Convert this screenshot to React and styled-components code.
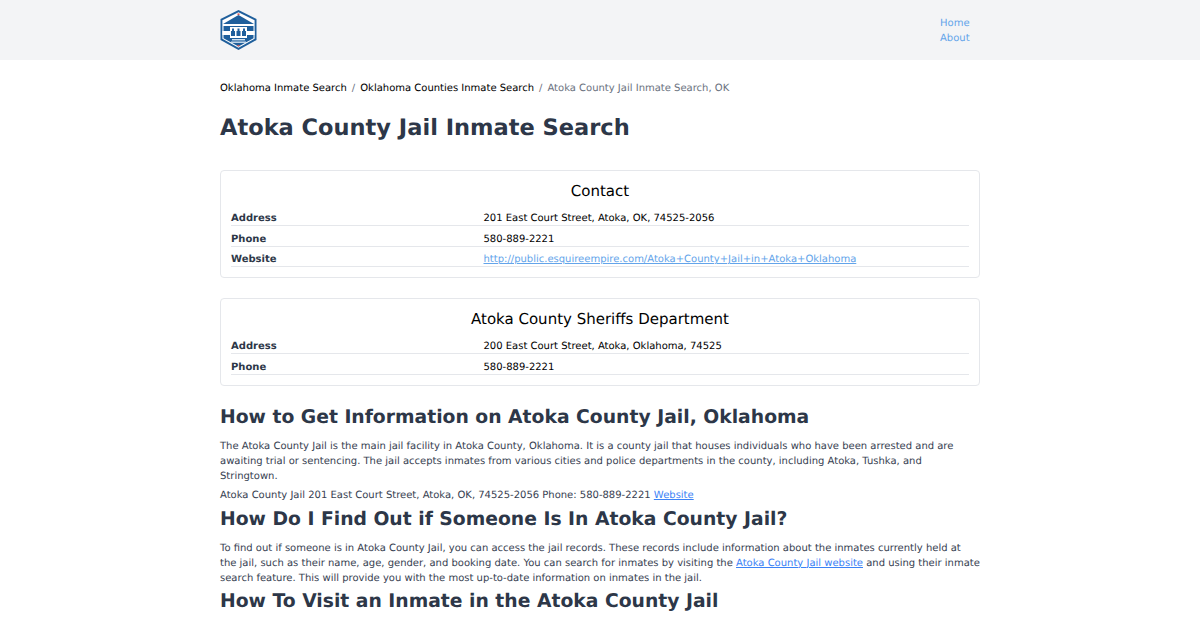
import React from 'react';
import styled, { createGlobalStyle } from 'styled-components';

const Global = createGlobalStyle`
  html, body { margin: 0; padding: 0; background: #fff; overflow: hidden; }
  body {
    font-family: "DejaVu Sans", sans-serif;
    color: #2d3748;
    text-rendering: geometricPrecision;
  }
`;

const Header = styled.header`
  height: 60px;
  background: #f3f4f6;
`;

const HeaderInner = styled.div`
  width: 760px;
  height: 100%;
  margin: 0 auto;
  display: flex;
  align-items: center;
  justify-content: space-between;
`;

const Nav = styled.nav`
  display: flex;
  flex-direction: column;
  width: 40px;
  margin-top: 1px;
`;

const NavLink = styled.a`
  font-size: 10px;
  line-height: 15px;
  color: #63a4ea;
  text-decoration: none;
`;

const Main = styled.main`
  width: 760px;
  margin: 0 auto;
`;

const Crumbs = styled.div`
  display: flex;
  gap: 5px;
  padding-top: 21px;
  font-size: 10px;
  line-height: 15px;
`;

const Crumb = styled.a`
  color: ${p => (p.$current ? '#6b7280' : '#000')};
  text-decoration: none;
`;

const Sep = styled.span`
  color: #6b7280;
`;

const Title = styled.h1`
  margin: 17px 0 27px;
  font-size: 22.5px;
  line-height: 30px;
  font-weight: 700;
`;

const Card = styled.section`
  border: 1px solid #e5e7eb;
  border-radius: 4px;
  padding: 10px 10px 10px;
  margin-bottom: 20px;
`;

const CardTitle = styled.h3`
  margin: 0 0 4.5px;
  text-align: center;
  font-size: 15px;
  font-weight: 400;
  line-height: 20px;
  color: #000;
`;

const Row = styled.div`
  display: grid;
  grid-template-columns: 252.5px 1fr;
  border-bottom: 1px solid #e5e7eb;
  font-size: 10px;
  line-height: 13px;
  padding-top: 6.5px;
`;

const Label = styled.span`
  font-weight: 700;
`;

const Value = styled.span`
  color: #000;
`;

const Url = styled.a`
  color: #63a4ea;
  text-decoration: underline;
`;

const Heading = styled.h2`
  margin: ${p => p.$top}px 0 0;
  font-size: 18.75px;
  line-height: 20px;
  font-weight: 700;
`;

const Para = styled.p`
  margin: ${p => p.$top}px 0 0;
  font-size: 10px;
  line-height: 15px;
  color: #374151;
`;

const TextLink = styled.a`
  color: #3b82f6;
  text-decoration: underline;
`;

const Logo = () => (
  <svg width="37" height="40" viewBox="0 0 37 40">
    <path d="M18.5 0 36.5 9v21L18.5 40 .5 30V9z" fill="#1f5f9c" />
    <path d="M18.5 2.2 34.6 10.2v18.6L18.5 37.8 2.4 28.8V10.2z" fill="#fff" />
    <path d="M18.5 5 34 14H3z" fill="#1f5f9c" />
    <path d="M3.5 16h30v12.2L18.5 36.4 3.5 28.2z" fill="#1f5f9c" />
    <path d="M2.4 21h8v4h-8zM26.6 21h8v4h-8z" fill="#fff" />
    <rect x="10" y="17" width="17" height="11" fill="#fff" />
    <path d="M12 18.5h2v2.5h1v5h-4v-5h1zM17.5 18.5h2v2.5h1v5h-4v-5h1zM23 18.5h2v2.5h1v5h-4v-5h1z" fill="#1f5f9c" />
    <rect x="12" y="29" width="13" height="1.4" fill="#cfe0f0" />
    <rect x="11" y="31.5" width="15" height="1.4" fill="#cfe0f0" />
    <rect x="17.5" y="3.4" width="2" height="1.6" fill="#d9534f" />
    <rect x="17.5" y="35" width="2" height="1.4" fill="#d9534f" />
  </svg>
);

export default function App() {
  return (
    <>
      <Global />
      <Header>
        <HeaderInner>
          <Logo />
          <Nav>
            <NavLink href="#">Home</NavLink>
            <NavLink href="#">About</NavLink>
          </Nav>
        </HeaderInner>
      </Header>
      <Main>
        <Crumbs>
          <Crumb href="#">Oklahoma Inmate Search</Crumb>
          <Sep>/</Sep>
          <Crumb href="#">Oklahoma Counties Inmate Search</Crumb>
          <Sep>/</Sep>
          <Crumb $current>Atoka County Jail Inmate Search, OK</Crumb>
        </Crumbs>
        <Title>Atoka County Jail Inmate Search</Title>
        <Card>
          <CardTitle>Contact</CardTitle>
          <Row><Label>Address</Label><Value>201 East Court Street, Atoka, OK, 74525-2056</Value></Row>
          <Row><Label>Phone</Label><Value>580-889-2221</Value></Row>
          <Row><Label>Website</Label><Url href="#">http://public.esquireempire.com/Atoka+County+Jail+in+Atoka+Oklahoma</Url></Row>
        </Card>
        <Card>
          <CardTitle>Atoka County Sheriffs Department</CardTitle>
          <Row><Label>Address</Label><Value>200 East Court Street, Atoka, Oklahoma, 74525</Value></Row>
          <Row><Label>Phone</Label><Value>580-889-2221</Value></Row>
        </Card>
        <Heading $top={22}>How to Get Information on Atoka County Jail, Oklahoma</Heading>
        <Para $top={11.5}>The Atoka County Jail is the main jail facility in Atoka County, Oklahoma. It is a county jail that houses individuals who have been arrested and are awaiting trial or sentencing. The jail accepts inmates from various cities and police departments in the county, including Atoka, Tushka, and Stringtown.</Para>
        <Para $top={4}>Atoka County Jail 201 East Court Street, Atoka, OK, 74525-2056 Phone: 580-889-2221 <TextLink href="#">Website</TextLink></Para>
        <Heading $top={7}>How Do I Find Out if Someone Is In Atoka County Jail?</Heading>
        <Para $top={10.5}>To find out if someone is in Atoka County Jail, you can access the jail records. These records include information about the inmates currently held at the jail, such as their name, age, gender, and booking date. You can search for inmates by visiting the <TextLink href="#">Atoka County Jail website</TextLink> and using their inmate search feature. This will provide you with the most up-to-date information on inmates in the jail.</Para>
        <Heading $top={6}>How To Visit an Inmate in the Atoka County Jail</Heading>
      </Main>
    </>
  );
}
